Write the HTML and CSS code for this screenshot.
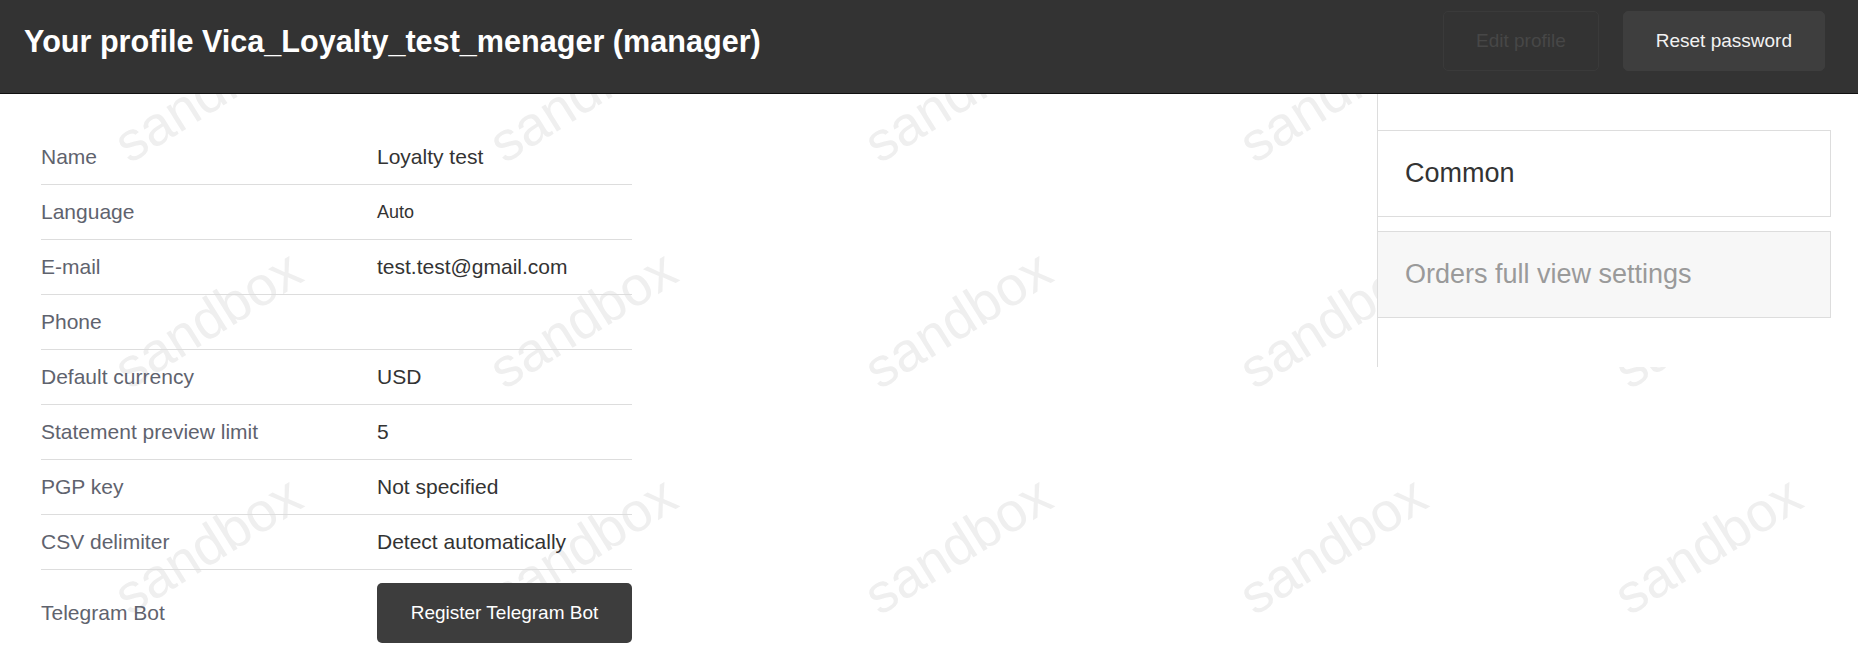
FILE: index.html
```html
<!DOCTYPE html>
<html lang="en">
<head>
<meta charset="utf-8">
<title>Your profile</title>
<link rel="stylesheet" href="styles.css">
</head>
<body>
<div class="page">
  <div class="watermark" aria-hidden="true">
    <span>sandbox</span><span>sandbox</span><span>sandbox</span><span>sandbox</span><span>sandbox</span>
    <span>sandbox</span><span>sandbox</span><span>sandbox</span><span>sandbox</span><span>sandbox</span>
    <span>sandbox</span><span>sandbox</span><span>sandbox</span><span>sandbox</span><span>sandbox</span>
  </div>
  <header class="topbar">
    <h1 class="title">Your profile Vica_Loyalty_test_menager (manager)</h1>
    <div class="actions">
      <button class="btn btn-ghost" disabled>Edit profile</button>
      <button class="btn btn-dark">Reset password</button>
    </div>
  </header>
  <main class="content">
    <div class="profile">
      <div class="row"><div class="label">Name</div><div class="value">Loyalty test</div></div>
      <div class="row"><div class="label">Language</div><div class="value value-small">Auto</div></div>
      <div class="row"><div class="label">E-mail</div><div class="value">test.test@gmail.com</div></div>
      <div class="row"><div class="label">Phone</div><div class="value"></div></div>
      <div class="row"><div class="label">Default currency</div><div class="value">USD</div></div>
      <div class="row"><div class="label">Statement preview limit</div><div class="value">5</div></div>
      <div class="row"><div class="label">PGP key</div><div class="value">Not specified</div></div>
      <div class="row"><div class="label">CSV delimiter</div><div class="value">Detect automatically</div></div>
      <div class="row row-last"><div class="label">Telegram Bot</div><div class="value"><button class="btn-register">Register Telegram Bot</button></div></div>
    </div>
    <aside class="side">
      <div class="tab tab-active">Common</div>
      <div class="tab tab-muted">Orders full view settings</div>
    </aside>
  </main>
</div>
</body>
</html>
```
FILE: styles.css
```css
html, body {
  margin: 0;
  padding: 0;
  background: #fff;
}

body {
  font-family: "Liberation Sans", Arial, sans-serif;
  overflow: hidden;
}

.page {
  position: relative;
  height: 666px;
  overflow: hidden;
}

.watermark {
  position: absolute;
  top: -20px;
  left: 20px;
  z-index: 0;
  display: grid;
  grid-template-columns: repeat(5, 375px);
  grid-auto-rows: 226px;
  pointer-events: none;
}

.watermark span {
  display: flex;
  align-items: center;
  justify-content: center;
  font-size: 55px;
  color: #efefef;
  transform: rotate(-32deg);
}

.topbar {
  position: relative;
  z-index: 2;
  box-sizing: border-box;
  height: 94px;
  display: flex;
  justify-content: space-between;
  align-items: flex-start;
  padding: 11px 33px 0 24px;
  background: #333;
  border-bottom: 1px solid #111;
}

.title {
  margin: 0;
  font-size: 30.6px;
  font-weight: bold;
  line-height: 60px;
  color: #fff;
}

.actions {
  display: flex;
  gap: 24px;
}

.btn {
  height: 60px;
  padding: 0 32px;
  font-family: inherit;
  font-size: 19px;
  border-radius: 5px;
}

.btn-ghost {
  background: transparent;
  border: 1px solid #3a3a3a;
  color: #474747;
}

.btn-dark {
  background: #3e3e3e;
  border: 1px solid #3e3e3e;
  color: #f2f2f2;
}

.content {
  position: relative;
  z-index: 1;
  display: flex;
  justify-content: space-between;
  align-items: flex-start;
  padding: 0 27px 0 41px;
}

.profile {
  width: 591px;
  padding-top: 36px;
}

.row {
  display: grid;
  grid-template-columns: 336px 1fr;
  align-items: center;
  box-sizing: border-box;
  height: 55px;
  border-bottom: 1px solid #ddd;
}

.row-last {
  height: auto;
  padding: 13px 0;
  border-bottom: none;
}

.label {
  font-size: 21px;
  color: #5f636e;
}

.value {
  font-size: 21px;
  color: #333;
}

.value-small {
  font-size: 18px;
}

.btn-register {
  display: block;
  width: 100%;
  height: 60px;
  background: #3d3d3d;
  color: #fff;
  border: none;
  border-radius: 5px;
  font-family: inherit;
  font-size: 19px;
}

.side {
  box-sizing: border-box;
  width: 454px;
  padding: 36px 0 49px;
  background: #fff;
  border-left: 1px solid #ddd;
}

.tab {
  box-sizing: border-box;
  height: 87px;
  display: flex;
  align-items: center;
  padding-left: 27px;
  margin-left: -1px;
  border: 1px solid #ddd;
  font-size: 27px;
}

.tab + .tab {
  margin-top: 14px;
}

.tab-active {
  background: #fff;
  color: #333;
}

.tab-muted {
  background: #f7f7f7;
  color: #9a9a9a;
}
```
